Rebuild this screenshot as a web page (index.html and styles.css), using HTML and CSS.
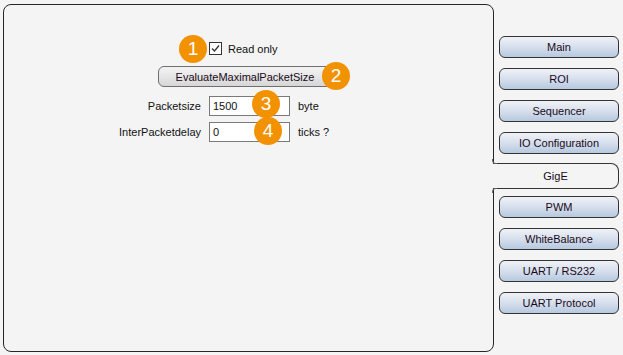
FILE: index.html
```html
<!DOCTYPE html>
<html lang="en">
  <head>
    <meta charset="UTF-8" />
    <title>GigE settings</title>
    <link rel="stylesheet" href="styles.css">
  </head>
  <body>
    <div class="window">
      <div class="panel">
        <div class="form">
          <div class="row row-check">
            <span class="badge badge-1">1</span>
            <span class="checkbox">
              <svg width="13" height="13" viewBox="0 0 13 13">
                <rect x="0.5" y="0.5" width="12" height="12" fill="#fff" stroke="#333" />
                <path d="M3 6.5 L5.5 9 L10 3.5" fill="none" stroke="#333" stroke-width="1.3" />
              </svg>
            </span>
            <span class="check-label">Read only</span>
          </div>
          <div class="row row-button">
            <button class="action-btn">EvaluateMaximalPacketSize</button>
            <span class="badge badge-2">2</span>
          </div>
          <div class="row row-field row-size">
            <span class="field-label">Packetsize</span>
            <span class="field-input">1500</span>
            <span class="field-unit">byte</span>
            <span class="badge badge-3">3</span>
          </div>
          <div class="row row-field row-delay">
            <span class="field-label">InterPacketdelay</span>
            <span class="field-input">0</span>
            <span class="field-unit">ticks ?</span>
            <span class="badge badge-4">4</span>
          </div>
        </div>
      </div>

      <nav class="tabs">
        <button class="tab">Main</button>
        <button class="tab">ROI</button>
        <button class="tab">Sequencer</button>
        <button class="tab">IO Configuration</button>
        <button class="tab active">GigE</button>
        <button class="tab">PWM</button>
        <button class="tab">WhiteBalance</button>
        <button class="tab">UART / RS232</button>
        <button class="tab">UART Protocol</button>
      </nav>
    </div>
  </body>
</html>
```

FILE: styles.css
```css
:root {
  --bg-color: #f4f4f4;
  --border-dark: #262626;
  --badge-color: #f39200;
  --font-family: "Liberation Sans", Arial, sans-serif;
}
* {
  box-sizing: border-box;
  margin: 0;
  padding: 0;
}
body {
  font-family: var(--font-family);
  font-size: 11px;
  background: var(--bg-color);
  color: #111;
}
.window {
  display: flex;
  height: 355px;
}
.panel {
  margin: 4px 0 0 3px;
  width: 491px;
  height: 348px;
  border: 1px solid var(--border-dark);
  border-radius: 8px;
  background: var(--bg-color);
}
.form {
  display: flex;
  flex-direction: column;
  padding-top: 37px;
}
.row {
  position: relative;
  display: flex;
  align-items: center;
}
.row-check {
  height: 13px;
  padding-left: 205px;
}
.checkbox {
  display: flex;
  width: 13px;
  height: 13px;
}
.check-label {
  margin-left: 6px;
}
.row-button {
  margin-top: 11px;
  padding-left: 154px;
}
.action-btn {
  width: 174px;
  height: 21px;
  font-family: var(--font-family);
  font-size: 11px;
  color: #1a0a1a;
  border: 1px solid #6f6f6f;
  border-radius: 6px;
  background: linear-gradient(#f3f3f3, #e6e6e6 50%, #d6d6d6);
}
.row-size {
  margin-top: 9px;
}
.row-delay {
  margin-top: 6px;
}
.field-label {
  width: 197px;
  text-align: right;
}
.field-input {
  width: 81px;
  height: 20px;
  margin-left: 8px;
  padding: 3px 0 0 3px;
  background: #fff;
  border: 1px solid #7a7a7a;
}
.field-unit {
  margin-left: 8px;
}
.badge {
  position: absolute;
  width: 28px;
  height: 28px;
  border-radius: 50%;
  background: var(--badge-color);
  color: #fff;
  font-size: 19px;
  line-height: 28px;
  text-align: center;
  z-index: 2;
}
.badge-1 {
  left: 175px;
  top: -7px;
}
.badge-2 {
  left: 318px;
  top: -4px;
}
.badge-3 {
  left: 248px;
  top: -6px;
}
.badge-4 {
  left: 250px;
  top: -5px;
}
.tabs {
  display: flex;
  flex-direction: column;
  gap: 10px;
  width: 120px;
  margin-left: 5px;
  padding-top: 36px;
}
.tab {
  position: relative;
  height: 22px;
  font-family: var(--font-family);
  font-size: 11px;
  color: #1a0a1a;
  border: 1px solid #333;
  border-radius: 6px;
  background: linear-gradient(#eff2f7, #d6dfec 50%, #b7c8e0);
}
.tab.active {
  height: 26px;
  margin: -1px 0 -3px -6px;
  width: 126px;
  border-left: none;
  border-radius: 0 8px 8px 0;
  background: var(--bg-color);
  z-index: 1;
}
.tab.active::before,
.tab.active::after {
  content: "";
  position: absolute;
  left: -1px;
  width: 4px;
  height: 4px;
  border-left: 1px solid #666;
}
.tab.active::before {
  top: -5px;
  border-bottom: 1px solid #666;
  border-bottom-left-radius: 4px;
}
.tab.active::after {
  bottom: -5px;
  border-top: 1px solid #666;
  border-top-left-radius: 4px;
}
```
